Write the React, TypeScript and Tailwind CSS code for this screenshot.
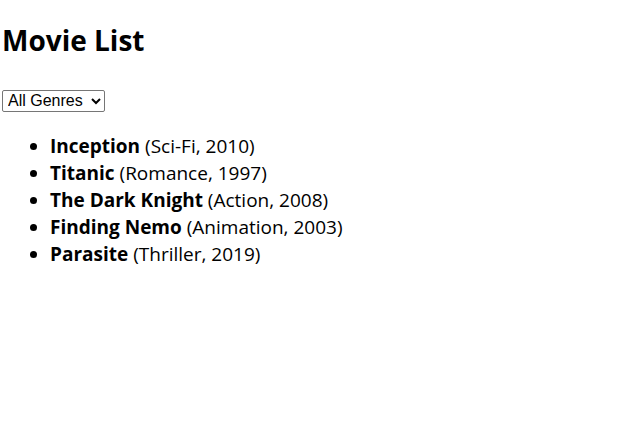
const movies = [
  { title: 'Inception', genre: 'Sci-Fi', year: 2010 },
  { title: 'Titanic', genre: 'Romance', year: 1997 },
  { title: 'The Dark Knight', genre: 'Action', year: 2008 },
  { title: 'Finding Nemo', genre: 'Animation', year: 2003 },
  { title: 'Parasite', genre: 'Thriller', year: 2019 },
]

export default function App() {
  return (
    <div className="min-h-screen bg-white text-black font-['Open_Sans',sans-serif]">
      {/* Header */}
      <h1 className="pt-[20px] pl-[2px] text-[28px] leading-[40px] font-bold">Movie List</h1>

      {/* Genre filter */}
      <div className="mt-[28px] pl-[2px]">
        <select className="h-[22px] w-[103px] border border-[#767676] rounded-[2px] bg-white px-[1px] text-[16px] font-['Liberation_Sans',sans-serif]">
          <option>All Genres</option>
          <option>Sci-Fi</option>
          <option>Romance</option>
          <option>Action</option>
          <option>Animation</option>
          <option>Thriller</option>
        </select>
      </div>

      {/* Movies */}
      <ul className="mt-[21px] pl-[50px] list-disc text-[19px] leading-[27px]">
        {movies.map((m) => (
          <li key={m.title}>
            <strong className="font-bold">{m.title}</strong> ({m.genre}, {m.year})
          </li>
        ))}
      </ul>
    </div>
  )
}
